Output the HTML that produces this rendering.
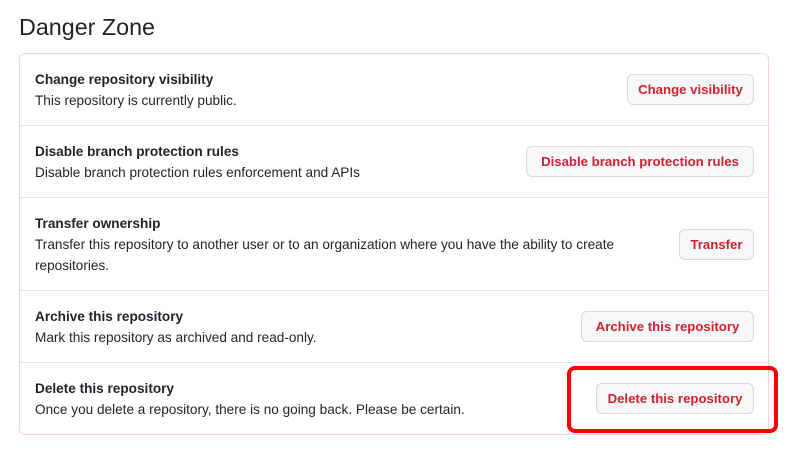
<html><head><style>
body{margin:0;background:#fff;font-family:"Liberation Sans",sans-serif;color:#1f2328;width:800px;height:450px;overflow:hidden;position:relative}
h2{position:absolute;left:19px;top:14px;margin:0;font-weight:400;font-size:23.3px}
.box{position:absolute;left:19px;top:53px;width:750px;height:382px;border:1px solid #ffd0d3;border-radius:6px;box-sizing:border-box}
.sep{position:absolute;left:20px;width:749px;height:1px;background:#e1e4e8}
.t{position:absolute;left:35px;font-size:13.6px;font-weight:700}
.d{position:absolute;left:35px;font-size:13.6px;line-height:21px;width:620px}
.b{position:absolute;height:31px;box-sizing:border-box;border:1px solid #d6d9dd;border-radius:6px;background:#f6f8fa;color:#cf222e;font-size:13.2px;font-weight:700;line-height:29px;text-align:center}
.hl{position:absolute;left:567px;top:366px;width:211px;height:67px;border:4px solid #f00;border-radius:8px;box-sizing:border-box}
</style></head><body>
<h2>Danger Zone</h2>
<div class="box"></div>
<div class="sep" style="top:125px"></div>
<div class="sep" style="top:197px"></div>
<div class="sep" style="top:290px"></div>
<div class="sep" style="top:362px"></div>
<div class="t" style="top:72px">Change repository visibility</div>
<div class="d" style="top:90px">This repository is currently public.</div>
<div class="b" style="left:627px;top:74px;width:127px">Change visibility</div>
<div class="t" style="top:144px">Disable branch protection rules</div>
<div class="d" style="top:162px">Disable branch protection rules enforcement and APIs</div>
<div class="b" style="left:526px;top:146px;width:228px">Disable branch protection rules</div>
<div class="t" style="top:216px">Transfer ownership</div>
<div class="d" style="top:234px">Transfer this repository to another user or to an organization where you have the ability to create repositories.</div>
<div class="b" style="left:679px;top:229px;width:75px">Transfer</div>
<div class="t" style="top:309px">Archive this repository</div>
<div class="d" style="top:327px">Mark this repository as archived and read-only.</div>
<div class="b" style="left:581px;top:311px;width:173px">Archive this repository</div>
<div class="t" style="top:381px">Delete this repository</div>
<div class="d" style="top:399px">Once you delete a repository, there is no going back. Please be certain.</div>
<div class="b" style="left:596px;top:383px;width:158px">Delete this repository</div>
<div class="hl"></div>
</body></html>
